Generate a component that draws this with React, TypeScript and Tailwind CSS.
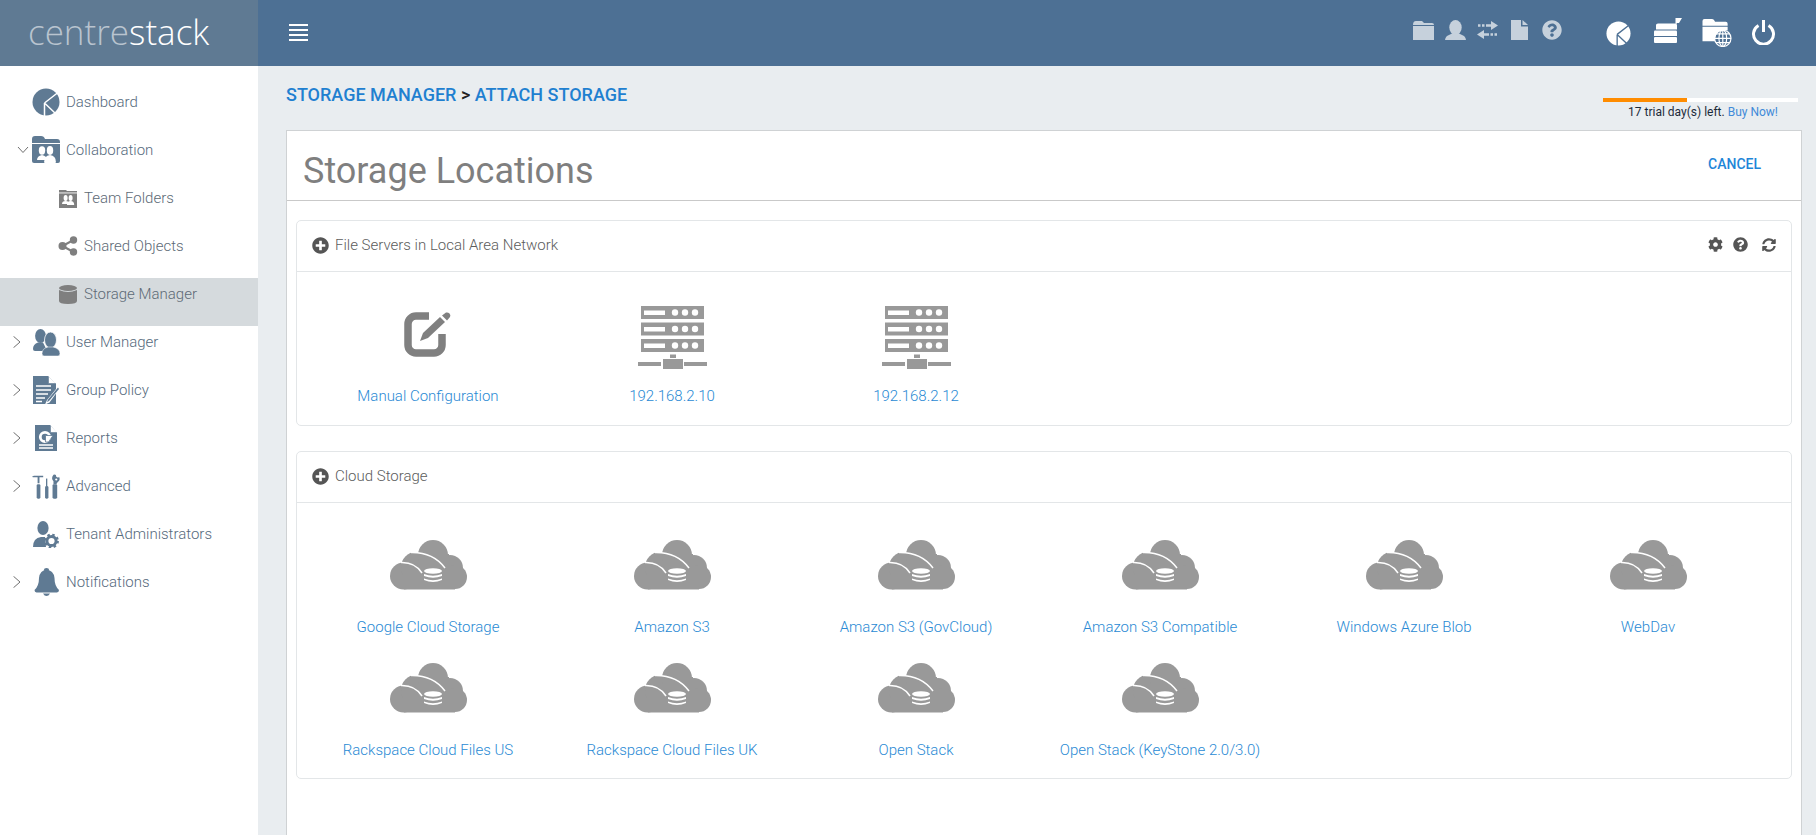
import React from "react";
import { FaQuestionCircle, FaPlusCircle, FaCog, FaSyncAlt } from "react-icons/fa";

const SB = "#5f7a93";

function Pie({ color = SB, cut = "#fff", className = "" }: { color?: string; cut?: string; className?: string }) {
  return (
    <svg viewBox="0 0 28 28" className={className}>
      <circle cx="14" cy="14" r="13.5" fill={color} />
      <path d="M12.500 15 L26 4.500 M12.500 15 L23.500 25.500 M12.500 15 V28" stroke={cut} strokeWidth="1.500" fill="none" />
    </svg>
  );
}
function Collab() {
  return (
    <svg viewBox="0 0 28 29" className="w-[28px] h-[29px]">
      <path d="M0 3 q0 -3 3 -3 h6 q3 0 4 3 h12 q3 0 3 3 v1 H0z" fill={SB} />
      <path d="M0 8 H28 V25 q0 2 -2 2 H2 q-2 0 -2 -2z" fill={SB} />
      <ellipse cx="10" cy="14.500" rx="3.200" ry="4.200" fill="#fff" />
      <ellipse cx="18" cy="14.500" rx="3.200" ry="4.400" fill="#fff" />
      <path d="M5 24 q0 -4 5 -5 q5 1 5 5z" fill="#fff" />
      <path d="M12 26.500 q0 -7 6 -7.500 q6 .5 6 7.500 q-6 3 -12 0z" fill="#fff" />
    </svg>
  );
}
function TeamFolder() {
  return (
    <svg viewBox="0 0 18 19" className="w-[18px] h-[19px]">
      <path d="M0 1 h7 l1 1 h10 v1.400 H0z" fill="#7f7f7f" />
      <rect x="0" y="4.400" width="18" height="14.600" fill="#7f7f7f" />
      <ellipse cx="6.600" cy="9" rx="2" ry="3" fill="#fff" />
      <ellipse cx="11.600" cy="9" rx="2" ry="3" fill="#fff" />
      <path d="M3 15 q0 -3 3.600 -3 q3.600 0 3.600 3z M8 16 q0 -4 3.600 -4 q3.600 0 3.600 4z" fill="#fff" />
    </svg>
  );
}
function Share() {
  return (
    <svg viewBox="0 0 20 20" className="w-[20px] h-[20px]" fill="#7f7f7f">
      <circle cx="4.500" cy="10" r="4" />
      <circle cx="15.500" cy="4" r="3.700" />
      <circle cx="15.500" cy="16" r="3.700" />
      <path d="M4.500 10 L15.500 4 M4.500 10 L15.500 16" stroke="#7f7f7f" strokeWidth="2" />
    </svg>
  );
}
function Db() {
  return (
    <svg viewBox="0 0 18 19" className="w-[18px] h-[19px]" fill="#7f7f7f">
      <ellipse cx="9" cy="3" rx="9" ry="3" />
      <path d="M0 5 q9 4 18 0 V16 q0 3 -9 3 q-9 0 -9 -3z" />
    </svg>
  );
}
function Users() {
  return (
    <svg viewBox="0 0 27 27" className="w-[27px] h-[27px]" fill={SB}>
      <ellipse cx="7.500" cy="7" rx="5.400" ry="7" />
      <path d="M0 20 q0 -5 5 -6.500 l5 0 l3 6 l-3 2.500 H2 q-2 0 -2 -2z" />
      <ellipse cx="17.500" cy="11" rx="6" ry="8" stroke="#fff" strokeWidth="0.800" />
      <path d="M9 24.500 q0 -5 6 -6.500 h5 q7 1.500 7 6.500 q0 2.500 -2 2.500 H11 q-2 0 -2 -2.500z" stroke="#fff" strokeWidth="0.500" />
    </svg>
  );
}
function Policy() {
  return (
    <svg viewBox="0 0 27 29" className="w-[27px] h-[29px]">
      <path d="M0 0 H15 L23 8 V28 H0z" fill={SB} />
      <path d="M15.500 .5 V7.500 H23" stroke={SB} strokeWidth="0.600" fill="#fff" />
      <path d="M3 10 H18 M3 14 H18 M3 18 H15 M3 22 H12 M3 25.500 H9" stroke="#fff" strokeWidth="1.300" />
      <path d="M25.500 10 L14 24 L12 28.500 L16.500 26.500 L27 12z" fill="#fff" />
      <path d="M25 11.500 L15 23.500 L14 26 L16 25 L26 13z" fill={SB} />
    </svg>
  );
}
function Report() {
  return (
    <svg viewBox="0 0 23 27" className="w-[23px] h-[27px]">
      <path d="M0 0 H15 L22 8 V26 H0z" fill={SB} />
      <path d="M15.500 .5 V7.500 H22" stroke={SB} strokeWidth="0.600" fill="#fff" />
      <circle cx="10" cy="12" r="4.700" fill="none" stroke="#fff" strokeWidth="2.800" />
      <path d="M10.500 10.500 H18 L13.500 17 H10.500z" fill="#fff" stroke={SB} strokeWidth="0.800" />
      <path d="M4 20 H18 M4 23 H18" stroke="#fff" strokeWidth="1.300" />
    </svg>
  );
}
function Tools() {
  return (
    <svg viewBox="0 0 30 27" className="w-[29px] h-[27px]" fill={SB}>
      <path d="M0 3 L2 2 H12 V3.500 H8 V10 H6 V3.500 H1z" />
      <rect x="5" y="11" width="4" height="15.500" rx="1.500" />
      <rect x="15" y="5" width="1.400" height="8" />
      <rect x="14" y="13" width="3.600" height="13.500" rx="1.500" />
      <rect x="22" y="11" width="5" height="15.500" rx="1.500" />
      <path d="M23 11 V8 q-3 -3 0 -7 q3 -1 3 2 l2 1 l1 -1 q1.500 3 -.5 5 l-2 2 v1z" />
      <circle cx="26" cy="6" r="1.200" fill="#fff" />
    </svg>
  );
}
function Admin() {
  return (
    <svg viewBox="0 0 26 27" className="w-[26px] h-[27px]" fill={SB}>
      <ellipse cx="10" cy="7" rx="5.600" ry="7" />
      <path d="M0 26 q0 -9 8 -10 h4 l1 10z" />
      <circle cx="18.500" cy="20" r="4.600" fill="none" stroke={SB} strokeWidth="3" />
      <circle cx="18.500" cy="20" r="6.200" fill="none" stroke={SB} strokeWidth="2.400" strokeDasharray="2.400 2.470" />
    </svg>
  );
}
function Bell() {
  return (
    <svg viewBox="0 0 25 28" className="w-[25px] h-[28px]" fill={SB}>
      <ellipse cx="12.500" cy="2" rx="2.600" ry="2" />
      <path d="M12.500 2 q7 0 8 8 q0 8 4.500 12 q0 2 -2 2.500 H2.500 q-2 -.5 -2 -2.500 q4.500 -4 4.500 -12 q1 -8 7.500 -8z" />
      <path d="M9 25.500 h7 q-1.500 2.500 -3.500 2.500 q-2 0 -3.500 -2.500z" />
    </svg>
  );
}
function Chevron({ down }: { down?: boolean }) {
  return (
    <svg viewBox="0 0 12 12" className={down ? "w-[12px] h-[12px] ml-[5px]" : "w-[12px] h-[12px]"}>
      <path d={down ? "M1 3 L6 8.500 L11 3" : "M1.500 .3 L8 6 L1.500 11.700"} stroke="#707070" strokeWidth="1" fill="none" />
    </svg>
  );
}
function Row({ icon, label, chevron, active, sub }: { icon: React.ReactNode; label: string; chevron?: "r" | "d"; active?: boolean; sub?: boolean }) {
  return (
    <div className={`h-12 ${active ? "bg-[#d5dadd]" : ""}`}>
      <div className={`h-8 flex items-center ${sub ? "pl-[58px]" : "pl-[12px]"}`}>
        {!sub && <div className="w-[20px] flex justify-start">{chevron && <Chevron down={chevron === "d"} />}</div>}
        <div className={`${sub ? "w-[20px] mr-[6px]" : "w-[28px] mr-[2px]"} flex justify-center shrink-0`}>{icon}</div>
        <span className={`text-[15px] font-light whitespace-nowrap ${sub ? "text-[#5d6a76]" : "ml-[4px] text-[#566a7d]"}`}>{label}</span>
      </div>
    </div>
  );
}
function ServerIcon() {
  return (
    <svg viewBox="0 0 69 63" className="w-[69px] h-[63px]" fill="#999">
      {[0, 16.500, 33].map((y) => (
        <g key={y}>
          <rect x="3" y={y} width="63" height="13" />
          <rect x="6" y={y + 4.500} width="21" height="4.500" fill="#fff" />
          <circle cx="37" cy={y + 6.500} r="3.200" fill="#fff" />
          <circle cx="47" cy={y + 6.500} r="3.200" fill="#fff" />
          <circle cx="57" cy={y + 6.500} r="3.200" fill="#fff" />
        </g>
      ))}
      <rect x="32" y="48.500" width="6" height="3.500" />
      <rect x="25" y="53" width="20" height="10" />
      <rect x="0" y="56" width="23" height="4" />
      <rect x="46" y="56" width="23" height="4" />
    </svg>
  );
}
function EditIcon() {
  return (
    <svg viewBox="0 0 50 45" className="w-[50px] h-[45px]">
      <path d="M26 4 H13 a8 8 0 0 0 -8 8 V33 a8 8 0 0 0 8 8 H31 a8 8 0 0 0 8 -8 V22" fill="none" stroke="#808080" strokeWidth="7.500" />
      <path d="M17 29 L20 21 L37 5 L42 10 L25 26z" fill="#808080" />
      <path d="M39 3.500 L43 0.500 Q45 0 46.500 1.500 Q48 3 47 5 L44 8.500z" fill="#808080" />
    </svg>
  );
}
function CloudIcon() {
  return (
    <svg viewBox="0 0 79 50" className="w-[79px] h-[50px]">
      <g fill="#999">
        <circle cx="14.500" cy="36" r="13.500" />
        <circle cx="27" cy="27" r="15" />
        <circle cx="44" cy="15" r="15" />
        <circle cx="61" cy="28" r="13" />
        <circle cx="66" cy="37" r="12" />
        <rect x="15" y="28" width="51" height="21.500" />
        <rect x="30" y="14" width="30" height="20" />
      </g>
      <path d="M12 22.500 Q26 22 33 33 M22 12.500 Q44 12 56 28" stroke="#fff" strokeWidth="1.500" fill="none" />
      <g fill="#fff">
        <ellipse cx="44" cy="31" rx="9" ry="2.800" />
        <path d="M35 34 q9 3.500 18 0 v2 q-9 3.500 -18 0z" />
        <path d="M35 38.500 q9 3.500 18 0 v1.500 q-9 4 -18 0z" />
      </g>
    </svg>
  );
}
function Item({ icon, label }: { icon: React.ReactNode; label: string }) {
  return (
    <div className="flex flex-col items-center">
      <div className="h-[80px] flex items-center justify-center">{icon}</div>
      <a className="mt-[12px] text-[15px] leading-5 font-light text-[#2a8ad4] whitespace-nowrap">{label}</a>
    </div>
  );
}
function Card({ title, tools, children }: { title: string; tools?: boolean; children: React.ReactNode }) {
  return (
    <section className="border border-[#e3e6e8] rounded-[5px] bg-white">
      <div className="h-[51px] border-b border-[#e3e6e8] flex items-center pl-[15px] pr-[15px]">
        <FaPlusCircle className="text-[#555] w-[17px] h-[17px] mr-[6px] -mt-[2px]" />
        <span className="text-[15px] font-light text-[#5c5c5c] -mt-[2px]">{title}</span>
        {tools && (
          <div className="ml-auto flex items-center gap-[10px] text-[#555] -mt-[3px]">
            <FaCog className="w-[15px] h-[15px]" />
            <FaQuestionCircle className="w-[15px] h-[15px]" />
            <FaSyncAlt className="w-[14px] h-[14px] ml-[4px]" />
          </div>
        )}
      </div>
      {children}
    </section>
  );
}
function Grid({ children }: { children: React.ReactNode }) {
  return <div className="px-[9px] pt-[22px] pb-[7px] grid grid-cols-[repeat(6,244px)] auto-rows-[123px]">{children}</div>;
}

export default function App() {
  const clouds = [
    "Google Cloud Storage",
    "Amazon S3",
    "Amazon S3 (GovCloud)",
    "Amazon S3 Compatible",
    "Windows Azure Blob",
    "WebDav",
    "Rackspace Cloud Files US",
    "Rackspace Cloud Files UK",
    "Open Stack",
    "Open Stack (KeyStone 2.0/3.0)",
  ];
  return (
    <div className="h-screen overflow-hidden bg-[#e9edf0] flex flex-col font-['Roboto',sans-serif]">
      <header className="h-[66px] shrink-0 bg-[#4d7094] flex items-center">
        <div className="w-[258px] h-full bg-[#5f7a93] flex items-center pl-[28px]">
          <span className="font-['Open_Sans',sans-serif] font-light text-[35px] leading-none -mt-[3px]">
            <span className="text-[#b9c4cf]">centre</span>
            <span className="text-white">stack</span>
          </span>
        </div>
        <div className="ml-[31px] flex flex-col gap-[3px] w-[19px] -mt-[1px]">
          <span className="h-[2px] bg-white" />
          <span className="h-[2px] bg-white" />
          <span className="h-[2px] bg-white" />
          <span className="h-[2px] bg-white" />
        </div>
        <div className="ml-auto flex items-center pr-[40px]">
          <div className="flex items-center gap-[11px] -mt-[6px] text-[#c6d1dc]">
            <svg viewBox="0 0 21 19" className="w-[21px] h-[19px]" fill="currentColor">
              <path d="M3 0 h6 l2 2 h8 q2 0 2 2 H0 q0 -4 3 -4z" />
              <rect x="0" y="5" width="21" height="14" />
            </svg>
            <svg viewBox="0 0 21 20" className="w-[21px] h-[20px]" fill="currentColor">
              <ellipse cx="10.500" cy="7.500" rx="6.200" ry="7.500" />
              <path d="M0 20 q.5 -4 4 -5 l4 -2 h5 l4 2 q3.500 1 4 5z" />
            </svg>
            <svg viewBox="0 0 21 18" className="w-[21px] h-[18px]" fill="currentColor">
              <path d="M14 0 L21 4.500 L14 9z M9 3.200 H14 V5.800 H9z M5 3.200 H7.500 V5.800 H5z M1 3.200 H3.500 V5.800 H1z" />
              <path d="M7 9 L0 13.500 L7 18z M7 12.200 H12 V14.800 H7z M13.500 12.200 H16 V14.800 H13.500z M17.500 12.200 H20 V14.800 H17.500z" />
            </svg>
            <svg viewBox="0 0 17 20" className="w-[17px] h-[20px] ml-[2px]" fill="currentColor">
              <path d="M0 0 H10 V6.500 H17 V20 H0z" />
              <path d="M11.500 0 L17 5 H11.500z" />
            </svg>
            <FaQuestionCircle className="w-[20px] h-[20px] ml-[3px]" />
          </div>
          <div className="ml-[44px] flex items-center">
            <Pie color="#fff" cut="#4d7094" className="w-[25px] h-[25px]" />
            <svg viewBox="0 0 28 26" className="w-[28px] h-[26px] ml-[23px] -mt-[4px]">
              <g fill="#fff">
                <path d="M2 7 Q2 5.500 4 5.500 H21 Q23 5.500 23 7 V11.500 H2z" />
                <path d="M0 13.500 Q0 12.500 1 12.500 H22 Q23 12.500 23 13.500 V18 H0z" />
                <path d="M0 20 Q0 19 1 19 H22 Q23 19 23 20 V24 Q23 25 22 25 H1 Q0 25 0 24z" />
                <rect x="21.500" y="0" width="1.200" height="6" />
                <path d="M22 0 H28 L25 5 H22z" />
              </g>
            </svg>
            <svg viewBox="0 0 30 30" className="w-[30px] h-[29px] ml-[20px] -mt-[2px]">
              <path d="M0 3 q0 -2 2 -2 h8 q2 0 3 3 h11 q2 0 2 2 v2 H0z M0 9 H26 V13 A10 10 0 0 0 13 24 H0z" fill="#fff" />
              <g fill="none" stroke="#fff" strokeWidth="1.200">
                <circle cx="21" cy="21" r="8.500" />
                <ellipse cx="21" cy="21" rx="4" ry="8.500" />
                <path d="M21 12.500 V29.500 M12.500 21 H29.500 M14 16.500 H28 M14 25.500 H28" />
              </g>
            </svg>
            <svg viewBox="0 0 25 25" className="w-[25px] h-[25px] ml-[19px] -mt-[2px]">
              <path d="M7.500 5.500 A10 10 0 1 0 17.500 5.500" fill="none" stroke="#fff" strokeWidth="3" />
              <path d="M12.500 0 V12" stroke="#fff" strokeWidth="3" />
            </svg>
          </div>
        </div>
      </header>
      <div className="flex-1 flex min-h-0">
        <aside className="w-[258px] shrink-0 bg-white pt-[20px]">
          <Row icon={<Pie className="w-[28px] h-[28px]" />} label="Dashboard" />
          <Row icon={<Collab />} label="Collaboration" chevron="d" />
          <Row sub icon={<TeamFolder />} label="Team Folders" />
          <Row sub icon={<Share />} label="Shared Objects" />
          <Row sub active icon={<Db />} label="Storage Manager" />
          <Row icon={<Users />} label="User Manager" chevron="r" />
          <Row icon={<Policy />} label="Group Policy" chevron="r" />
          <Row icon={<Report />} label="Reports" chevron="r" />
          <Row icon={<Tools />} label="Advanced" chevron="r" />
          <Row icon={<Admin />} label="Tenant Administrators" />
          <Row icon={<Bell />} label="Notifications" chevron="r" />
        </aside>
        <main className="flex-1 min-w-0 pl-[28px] pr-[14px]">
          <div className="h-[64px] flex relative">
            <div className="mt-[19px] text-[18px] leading-5 font-medium text-[#1f80d0] whitespace-nowrap">
              STORAGE MANAGER <span className="text-[#222]">&gt;</span> ATTACH STORAGE
            </div>
            <div className="absolute right-[4px] top-[32px] w-[195px]">
              <div className="h-[4px] bg-white">
                <div className="h-full w-[84px] bg-[#ff8c00]" />
              </div>
              <div className="mt-[3px] text-center text-[12px] leading-[14px] pl-[5px] text-[#1c2b3a]">
                17 trial day(s) left. <span className="text-[#3f8ad8]">Buy Now!</span>
              </div>
            </div>
          </div>
          <div className="h-[800px] bg-white border border-[#cfd2d4]">
            <div className="h-[70px] border-b border-[#c9c9c9] flex items-center pl-[16px] pr-[40px]">
              <h1 className="text-[36px] leading-none text-[#7f7f7f] font-normal mt-[11px]">Storage Locations</h1>
              <a className="ml-auto text-[14px] font-medium text-[#1f86d8] -mt-[3px]">CANCEL</a>
            </div>
            <div className="px-[9px] pt-[19px] flex flex-col gap-[25px]">
              <Card title="File Servers in Local Area Network" tools>
                <div className="pb-[1px]">
                  <Grid>
                    <Item icon={<EditIcon />} label="Manual Configuration" />
                    <Item icon={<div className="mt-[7px]"><ServerIcon /></div>} label="192.168.2.10" />
                    <Item icon={<div className="mt-[7px]"><ServerIcon /></div>} label="192.168.2.12" />
                  </Grid>
                </div>
              </Card>
              <Card title="Cloud Storage">
                <Grid>
                  {clouds.map((c) => (
                    <Item key={c} icon={<CloudIcon />} label={c} />
                  ))}
                </Grid>
              </Card>
            </div>
          </div>
        </main>
      </div>
    </div>
  );
}
